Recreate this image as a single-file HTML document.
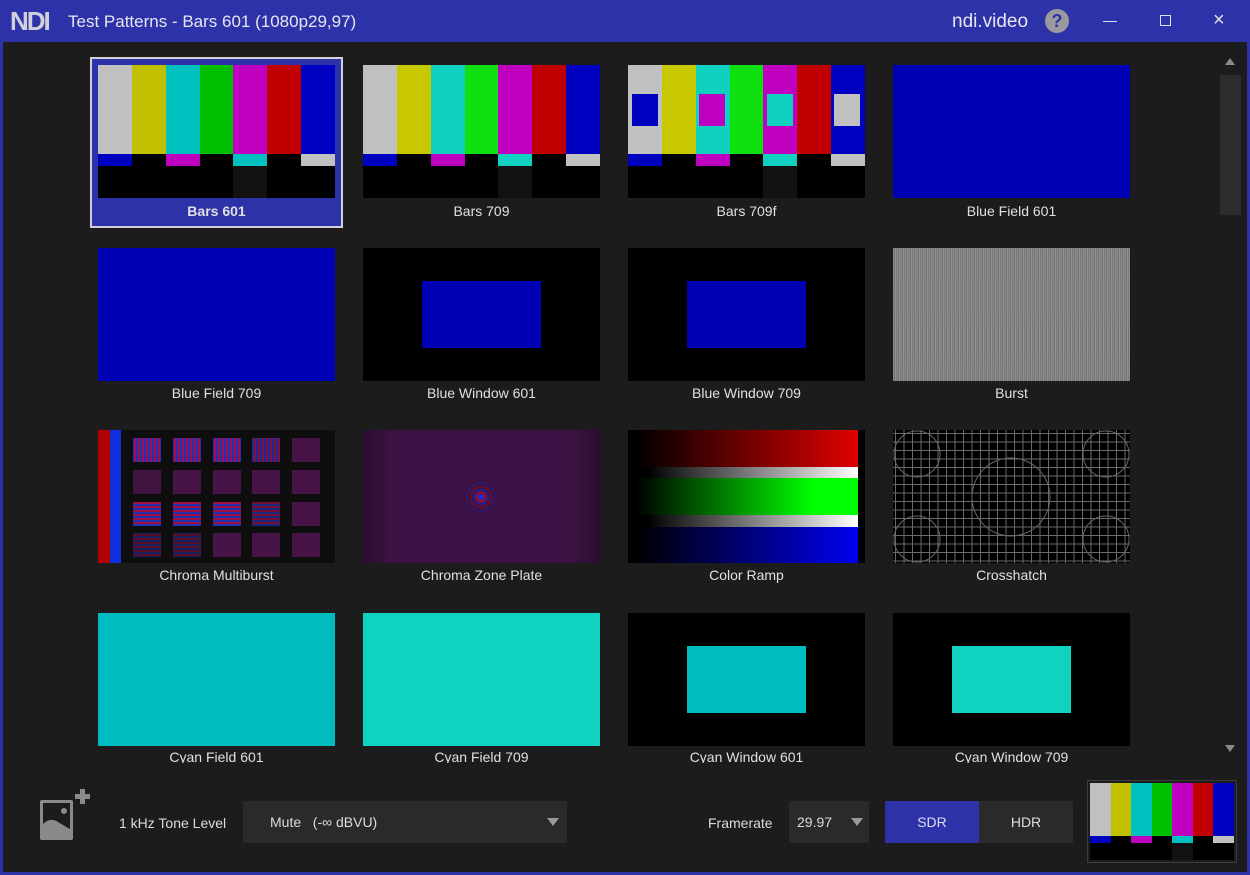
<!DOCTYPE html>
<html><head><meta charset="utf-8"><style>
*{margin:0;padding:0;box-sizing:border-box}
body{width:1250px;height:875px;background:#2e32a8;font-family:"Liberation Sans",sans-serif;overflow:hidden;position:relative}
.title{position:absolute;left:0;top:0;width:1250px;height:42px;color:#e6e6ee}
.main{position:absolute;left:3px;top:42px;width:1244px;height:830px;background:#1c1c1c}
.view{position:absolute;left:0;top:0;width:1244px;height:721px;overflow:hidden}
.t{position:absolute;width:237px;height:133px;overflow:hidden}
.lbl{position:absolute;width:253px;text-align:center;color:#e0e0e0;font-size:14px}
.bars{display:flex;flex-direction:column}
.row{display:flex}
.row div{flex:1}
</style></head><body>
<div class="title">
 <div style="position:absolute;left:10px;top:6px;font-size:26px;font-weight:bold;color:#cfd0dc;letter-spacing:-2px">NDI</div>
 <div style="position:absolute;left:68px;top:12px;font-size:17px">Test Patterns - Bars 601 (1080p29,97)</div>
 <div style="position:absolute;left:952px;top:11px;font-size:19px">ndi.video</div>
 <div style="position:absolute;left:1045px;top:9px;width:24px;height:24px;border-radius:50%;background:#9a9a9e;color:#2e32a8;font-weight:bold;font-size:18px;text-align:center;line-height:24px">?</div>
 <div style="position:absolute;left:1103px;top:21px;width:14px;height:1px;background:#e0e0e0"></div>
 <div style="position:absolute;left:1160px;top:15px;width:11px;height:11px;border:1px solid #e0e0e0"></div>
 <div style="position:absolute;left:1213px;top:9px;font-size:20px;color:#e0e0e0">×</div>
</div>
<div class="main">
<div class="view">
 <div style="position:absolute;left:87px;top:15px;width:253px;height:171px;background:#2e32a8;border:2px solid #d0d0d8"></div>
 <!-- row1 -->
 <div class="t bars" style="left:95px;top:23px">
  <div class="row" style="height:89px"><div style="background:#c0c0c0"></div><div style="background:#c0c000"></div><div style="background:#00c0c0"></div><div style="background:#00c000"></div><div style="background:#c000c0"></div><div style="background:#c00000"></div><div style="background:#0000c0"></div></div>
  <div class="row" style="height:12px"><div style="background:#0000c0"></div><div style="background:#000"></div><div style="background:#c000c0"></div><div style="background:#000"></div><div style="background:#00c0c0"></div><div style="background:#000"></div><div style="background:#c0c0c0"></div></div>
  <div class="row" style="height:32px"><div style="background:#000"></div><div style="background:#000"></div><div style="background:#000"></div><div style="background:#000"></div><div style="background:#111"></div><div style="background:#000"></div><div style="background:#000"></div></div>
 </div>
 <div class="lbl" style="left:87px;top:161px;font-weight:bold">Bars 601</div>
 <div class="t bars" style="left:360px;top:23px">
  <div class="row" style="height:89px"><div style="background:#c0c0c0"></div><div style="background:#c8c800"></div><div style="background:#10d0c0"></div><div style="background:#10e010"></div><div style="background:#c000c0"></div><div style="background:#c00000"></div><div style="background:#0000c0"></div></div>
  <div class="row" style="height:12px"><div style="background:#0000c0"></div><div style="background:#000"></div><div style="background:#c000c0"></div><div style="background:#000"></div><div style="background:#10d0c0"></div><div style="background:#000"></div><div style="background:#c0c0c0"></div></div>
  <div class="row" style="height:32px"><div style="background:#000"></div><div style="background:#000"></div><div style="background:#000"></div><div style="background:#000"></div><div style="background:#111"></div><div style="background:#000"></div><div style="background:#000"></div></div>
 </div>
 <div class="lbl" style="left:352px;top:161px">Bars 709</div>
 <div class="t bars" style="left:625px;top:23px">
  <div class="row" style="height:89px"><div style="background:#c0c0c0"></div><div style="background:#c8c800"></div><div style="background:#10d0c0"></div><div style="background:#10e010"></div><div style="background:#c000c0"></div><div style="background:#c00000"></div><div style="background:#0000c0"></div></div>
  <div class="row" style="height:12px"><div style="background:#0000c0"></div><div style="background:#000"></div><div style="background:#c000c0"></div><div style="background:#000"></div><div style="background:#10d0c0"></div><div style="background:#000"></div><div style="background:#c0c0c0"></div></div>
  <div class="row" style="height:32px"><div style="background:#000"></div><div style="background:#000"></div><div style="background:#000"></div><div style="background:#000"></div><div style="background:#111"></div><div style="background:#000"></div><div style="background:#000"></div></div>
  <div style="position:absolute;left:4px;top:29px;width:26px;height:32px;background:#0000c0"></div>
  <div style="position:absolute;left:71px;top:29px;width:26px;height:32px;background:#c000c0"></div>
  <div style="position:absolute;left:139px;top:29px;width:26px;height:32px;background:#10d0c0"></div>
  <div style="position:absolute;left:206px;top:29px;width:26px;height:32px;background:#c0c0c0"></div>
 </div>
 <div class="lbl" style="left:617px;top:161px">Bars 709f</div>
 <div class="t" style="left:890px;top:23px;background:#0000b4"></div>
 <div class="lbl" style="left:882px;top:161px">Blue Field 601</div>
 <!-- row2 -->
 <div class="t" style="left:95px;top:206px;background:#0000b4"></div>
 <div class="lbl" style="left:87px;top:343px">Blue Field 709</div>
 <div class="t" style="left:360px;top:206px;background:#000"><div style="position:absolute;left:59px;top:33px;width:119px;height:67px;background:#0000b4"></div></div>
 <div class="lbl" style="left:352px;top:343px">Blue Window 601</div>
 <div class="t" style="left:625px;top:206px;background:#000"><div style="position:absolute;left:59px;top:33px;width:119px;height:67px;background:#0000b4"></div></div>
 <div class="lbl" style="left:617px;top:343px">Blue Window 709</div>
 <div class="t" style="left:890px;top:206px;background:repeating-linear-gradient(90deg,#8a8a8a 0 1px,#6a6a6a 1px 2px,#9a9a9a 2px 3px,#777 3px 4px)"><div style="position:absolute;inset:0;background:linear-gradient(180deg,rgba(130,130,130,.3),rgba(130,130,130,.5) 40%,rgba(130,130,130,.2) 70%,rgba(130,130,130,.5))"></div></div>
 <div class="lbl" style="left:882px;top:343px">Burst</div>
 <!-- row3 -->
 <div class="t" style="left:95px;top:388px;background:#0e0e0e">
  <div style="position:absolute;left:0;top:0;width:12px;height:133px;background:#b00000"></div>
  <div style="position:absolute;left:12px;top:0;width:11px;height:133px;background:#1030e0"></div>
  <svg style="position:absolute;left:0;top:0" width="237" height="133">
   <defs><pattern id="v" width="4" height="4" patternUnits="userSpaceOnUse"><rect width="2" height="4" fill="#a01050"/><rect x="2" width="2" height="4" fill="#2030b0"/></pattern>
   <pattern id="h" width="4" height="4" patternUnits="userSpaceOnUse"><rect width="4" height="2" fill="#a01040"/><rect y="2" width="4" height="2" fill="#2030b0"/></pattern></defs>
   <g fill="#461446">
    <rect x="35" y="8" width="28" height="24" fill="url(#v)"/><rect x="75" y="8" width="28" height="24" fill="url(#v)"/><rect x="115" y="8" width="28" height="24" fill="url(#v)"/><rect x="154" y="8" width="28" height="24" fill="url(#v)" opacity=".8"/><rect x="194" y="8" width="28" height="24"/>
    <rect x="35" y="40" width="28" height="24" opacity=".9"/><rect x="75" y="40" width="28" height="24"/><rect x="115" y="40" width="28" height="24"/><rect x="154" y="40" width="28" height="24"/><rect x="194" y="40" width="28" height="24"/>
    <rect x="35" y="72" width="28" height="24" fill="url(#h)"/><rect x="75" y="72" width="28" height="24" fill="url(#h)"/><rect x="115" y="72" width="28" height="24" fill="url(#h)"/><rect x="154" y="72" width="28" height="24" fill="url(#h)" opacity=".7"/><rect x="194" y="72" width="28" height="24"/>
    <rect x="35" y="103" width="28" height="24" fill="url(#h)" opacity=".5"/><rect x="75" y="103" width="28" height="24" fill="url(#h)" opacity=".5"/><rect x="115" y="103" width="28" height="24"/><rect x="154" y="103" width="28" height="24"/><rect x="194" y="103" width="28" height="24"/>
   </g>
  </svg>
 </div>
 <div class="lbl" style="left:87px;top:525px">Chroma Multiburst</div>
 <div class="t" style="left:360px;top:388px;background:linear-gradient(90deg,#2a0e30,#3c1244 12%,#3c1244 88%,#2a0e30)">
  <svg width="237" height="133" style="position:absolute;left:0;top:0"><g fill="none" stroke-width="1.5">
   <circle cx="118" cy="67" r="14" stroke="#301870"/><circle cx="118" cy="67" r="10" stroke="#6a1030"/><circle cx="118" cy="67" r="7" stroke="#2020b0"/><circle cx="118" cy="67" r="4.5" stroke="#c01020"/></g><circle cx="118" cy="67" r="3" fill="#2030d0"/></svg>
 </div>
 <div class="lbl" style="left:352px;top:525px">Chroma Zone Plate</div>
 <div class="t" style="left:625px;top:388px;background:#000">
  <div style="position:absolute;left:8px;top:0;width:222px;height:37px;background:linear-gradient(90deg,#000,#e00000)"></div>
  <div style="position:absolute;left:8px;top:37px;width:222px;height:11px;background:linear-gradient(90deg,#000 5%,#fff)"></div>
  <div style="position:absolute;left:8px;top:48px;width:222px;height:37px;background:linear-gradient(90deg,#000,#00ff00 80%)"></div>
  <div style="position:absolute;left:8px;top:85px;width:222px;height:12px;background:linear-gradient(90deg,#000 5%,#fff)"></div>
  <div style="position:absolute;left:8px;top:97px;width:222px;height:36px;background:linear-gradient(90deg,#000,#0000f0)"></div>
 </div>
 <div class="lbl" style="left:617px;top:525px">Color Ramp</div>
 <div class="t" style="left:890px;top:388px;background:#000">
  <div style="position:absolute;inset:0;background-image:linear-gradient(90deg,#6a6a6a 1px,transparent 1px),linear-gradient(#6a6a6a 1px,transparent 1px);background-size:8.5px 8.5px;background-position:2px 3px"></div>
  <svg width="237" height="133" style="position:absolute;left:0;top:0"><g fill="none" stroke="#666" stroke-width="1"><circle cx="24" cy="24" r="23"/><circle cx="213" cy="24" r="23"/><circle cx="24" cy="109" r="23"/><circle cx="213" cy="109" r="23"/><circle cx="118" cy="67" r="39"/></g></svg>
 </div>
 <div class="lbl" style="left:882px;top:525px">Crosshatch</div>
 <!-- row4 -->
 <div class="t" style="left:95px;top:571px;background:#00bcc0"></div>
 <div class="lbl" style="left:87px;top:707px">Cyan Field 601</div>
 <div class="t" style="left:360px;top:571px;background:#10d2c0"></div>
 <div class="lbl" style="left:352px;top:707px">Cyan Field 709</div>
 <div class="t" style="left:625px;top:571px;background:#000"><div style="position:absolute;left:59px;top:33px;width:119px;height:67px;background:#00bcc0"></div></div>
 <div class="lbl" style="left:617px;top:707px">Cyan Window 601</div>
 <div class="t" style="left:890px;top:571px;background:#000"><div style="position:absolute;left:59px;top:33px;width:119px;height:67px;background:#10d2c0"></div></div>
 <div class="lbl" style="left:882px;top:707px">Cyan Window 709</div>
</div>
<!-- scrollbar -->
<div style="position:absolute;left:1222px;top:16px;width:0;height:0;border-left:5px solid transparent;border-right:5px solid transparent;border-bottom:7px solid #8a8a8a"></div>
<div style="position:absolute;left:1217px;top:33px;width:21px;height:140px;background:#2c2c2c"></div>
<div style="position:absolute;left:1222px;top:703px;width:0;height:0;border-left:5px solid transparent;border-right:5px solid transparent;border-top:7px solid #8a8a8a"></div>
<!-- bottom -->
<svg style="position:absolute;left:35px;top:745px" width="60" height="60">
 <rect x="2" y="13" width="33" height="40" rx="2" fill="#8a8a8a"/><rect x="5" y="16" width="27" height="29" fill="#1c1c1c"/>
 <path d="M5 37 Q12 30 20 35 T32 42 V45 H5 Z" fill="#8a8a8a"/><circle cx="26" cy="24" r="3" fill="#8a8a8a"/>
 <rect x="42" y="2" width="5" height="15" fill="#8a8a8a"/><rect x="37" y="7" width="15" height="5" fill="#8a8a8a"/>
</svg>
<div style="position:absolute;left:116px;top:773px;font-size:14px;color:#dcdcdc">1 kHz Tone Level</div>
<div style="position:absolute;left:240px;top:759px;width:324px;height:42px;background:#2a2a2a;color:#dcdcdc;font-size:14px;line-height:42px;padding-left:27px">Mute&nbsp;&nbsp;&nbsp;(-∞ dBVU)
 <div style="position:absolute;right:8px;top:17px;border-left:6px solid transparent;border-right:6px solid transparent;border-top:8px solid #999"></div></div>
<div style="position:absolute;left:705px;top:773px;font-size:14px;color:#dcdcdc">Framerate</div>
<div style="position:absolute;left:786px;top:759px;width:80px;height:42px;background:#2a2a2a;color:#dcdcdc;font-size:14px;line-height:42px;padding-left:8px">29.97
 <div style="position:absolute;right:6px;top:17px;border-left:6px solid transparent;border-right:6px solid transparent;border-top:8px solid #999"></div></div>
<div style="position:absolute;left:882px;top:759px;width:94px;height:42px;background:#2e32a8;color:#dcdcf0;font-size:14px;line-height:42px;text-align:center">SDR</div>
<div style="position:absolute;left:976px;top:759px;width:94px;height:42px;background:#2a2a2a;color:#dcdcdc;font-size:14px;line-height:42px;text-align:center">HDR</div>
<div style="position:absolute;left:1084px;top:738px;width:150px;height:83px;border:1px solid #3c3c3c;padding:2px;background:#1c1c1c">
 <div class="bars" style="width:144px;height:77px;display:flex;flex-direction:column">
  <div class="row" style="height:53px"><div style="background:#c0c0c0"></div><div style="background:#c0c000"></div><div style="background:#00c0c0"></div><div style="background:#00c000"></div><div style="background:#c000c0"></div><div style="background:#c00000"></div><div style="background:#0000c0"></div></div>
  <div class="row" style="height:7px"><div style="background:#0000c0"></div><div style="background:#000"></div><div style="background:#c000c0"></div><div style="background:#000"></div><div style="background:#00c0c0"></div><div style="background:#000"></div><div style="background:#c0c0c0"></div></div>
  <div class="row" style="height:17px"><div style="background:#000"></div><div style="background:#000"></div><div style="background:#000"></div><div style="background:#000"></div><div style="background:#111"></div><div style="background:#000"></div><div style="background:#000"></div></div>
 </div>
</div>
</div>
</body></html>
